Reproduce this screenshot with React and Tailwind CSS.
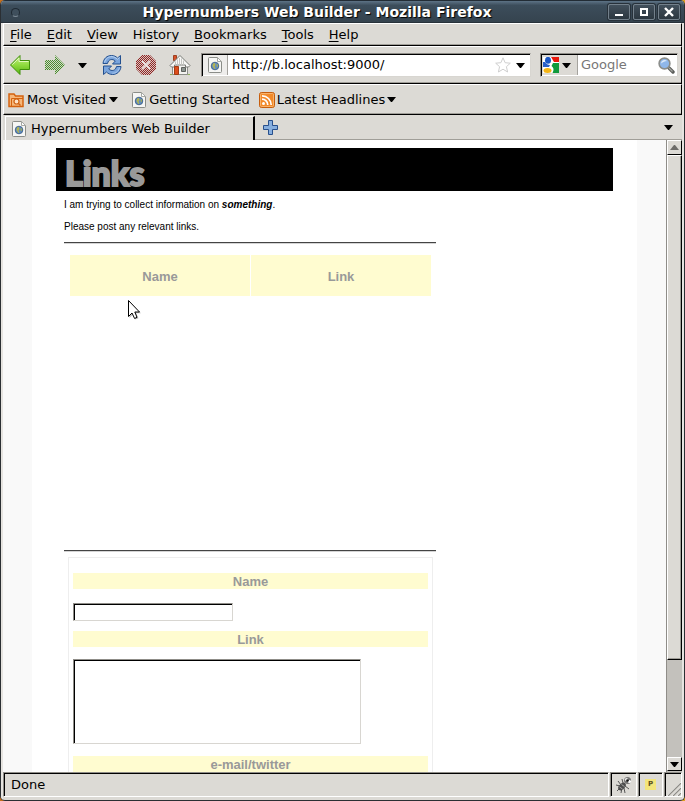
import React from "react";

const menus = [
  ["F", "ile", ""],
  ["E", "dit", ""],
  ["V", "iew", ""],
  ["s", "tory", "Hi"],
  ["B", "ookmarks", ""],
  ["T", "ools", ""],
  ["H", "elp", ""],
];

const raised = "border border-t-white border-l-white border-r-black border-b-black bg-[#dcdad5]";
const panel = `${raised} shadow-[inset_0_-1px_0_#a09e98]`;
const field = "border border-t-[#8f8d88] border-l-[#8f8d88] border-r-[#d8d6d1] border-b-[#d8d6d1] bg-white shadow-[inset_1px_1px_0_#000]";
const statusCell = "border border-t-[#8f8d88] border-l-[#8f8d88] border-r-white border-b-white shadow-[inset_1px_1px_0_#000]";

function Caret({ className = "" }) {
  return (
    <svg className={className} width="9" height="5" viewBox="0 0 9 5" aria-hidden="true">
      <path d="M0 0h9L5 5H4z" fill="#000" />
    </svg>
  );
}

function PageIcon() {
  return (
    <svg width="14" height="16" viewBox="0 0 14 16" className="shrink-0" aria-hidden="true">
      <path d="M1.500.5h8l4 4v10a1 1 0 0 1-1 1h-11a1 1 0 0 1-1-1v-13a1 1 0 0 1 1-1z" fill="#f6f6f4" stroke="#8b8d88" />
      <path d="M9.500.5v4h4z" fill="#fff" stroke="#a6a8a3" />
      <circle cx="7" cy="9" r="3.800" fill="#5f8cc4" stroke="#33557f" strokeWidth=".8" />
      <path d="M5 6.500l2-.5.500 2-1 1.500 1 2-1.200.5L4.500 9z" fill="#b5b450" />
      <path d="M8.500 7l1.500.5v2l-1.200 1z" fill="#a3ac58" />
    </svg>
  );
}

function BackIcon() {
  return (
    <svg width="22" height="22" viewBox="0 0 22 22" aria-hidden="true">
      <defs>
        <linearGradient id="back" x1="0" y1="0" x2="0" y2="1">
          <stop offset="0" stopColor="#c9f08d" />
          <stop offset=".5" stopColor="#8fdb3e" />
          <stop offset="1" stopColor="#59b512" />
        </linearGradient>
      </defs>
      <path d="M.5 11 10 1.500V6.500H19.500V15.500H10V20.500z" fill="url(#back)" stroke="#3f8f0a" strokeLinejoin="round" />
      <path d="M2.300 10.700 9 4v3.500h9.500" fill="none" stroke="#e0f8ba" />
    </svg>
  );
}

function ForwardIcon() {
  return (
    <svg width="22" height="22" viewBox="0 0 22 22" aria-hidden="true">
      <defs>
        <pattern id="fwdDots" width="2" height="2" patternUnits="userSpaceOnUse">
          <rect width="2" height="2" fill="#cfdcc4" />
          <path d="M0 0h1v1H0zM1 1h1v1H1z" fill="#4c8a30" />
        </pattern>
      </defs>
      <path d="M21 11 11 1v5H1v10h10v5z" fill="url(#fwdDots)" />
    </svg>
  );
}

function ReloadIcon() {
  return (
    <svg width="22" height="22" viewBox="0 0 22 22" aria-hidden="true">
      <g fill="#7ba5dc" stroke="#24508f" strokeLinejoin="round">
        <path d="M2 9.500C2.500 4.500 6 1.500 10.500 1.500c2.500 0 4.500 1 6 2.500l3-2.500v8.500h-8l2.800-3C11.500 4.500 7.500 5 6.500 9.500z" />
        <path d="M20 12.500c-.5 5-4 8-8.500 8-2.500 0-4.500-1-6-2.500l-3 2.500V12h8l-2.800 3c2.800 2.500 6.800 2 7.800-2.500z" />
      </g>
      <path d="M3.500 8.500C4.500 4.500 7.500 2.500 11 2.700c2 .1 3.800 1 5.300 2.600l2.200-1.800" fill="none" stroke="#bcd5f3" />
      <path d="M18.500 13.500c-1 4-3.500 5.700-7 5.800" fill="none" stroke="#a9c7ee" />
    </svg>
  );
}

function StopIcon() {
  return (
    <svg width="22" height="22" viewBox="0 0 22 22" aria-hidden="true">
      <defs>
        <pattern id="stopDots" width="2" height="2" patternUnits="userSpaceOnUse">
          <rect width="2" height="2" fill="#d9c3bf" />
          <path d="M0 0h1v1H0zM1 1h1v1H1z" fill="#8e2624" />
        </pattern>
      </defs>
      <path d="M7 1h8l6 6v8l-6 6H7l-6-6V7z" fill="url(#stopDots)" />
      <path d="M7 7l8 8M15 7l-8 8" stroke="#ece2e0" strokeWidth="1.800" />
    </svg>
  );
}

function HomeIcon() {
  return (
    <svg width="22" height="22" viewBox="0 0 22 22" aria-hidden="true">
      <path d="M1 20.500h20" stroke="#8fb35c" />
      <path d="M4.500 1.500h3v5h-3z" fill="#d8512a" stroke="#9c4020" />
      <path d="M3.500 11 11 4l7.500 7v9.500h-15z" fill="#f3f3f0" stroke="#8b8d88" />
      <path d="M1 11.500 11 1.500l10 10-1.500 1.500h-3V11h-11v2h-3z" fill="#f8f8f6" stroke="#777974" strokeLinejoin="round" />
      <path d="M6.500 7.500v4M8.500 5.500v6M10.500 4v7.500M12.500 4.500v7M14.500 6.500v5" stroke="#c4c5c1" />
      <path d="M5.500 12.500h4v8h-4z" fill="#dc4e1c" stroke="#a23c14" />
      <path d="M12.500 13.500h4v4h-4z" fill="#8d9691" stroke="#5d605c" />
    </svg>
  );
}

function FolderIcon() {
  return (
    <svg width="16" height="16" viewBox="0 0 16 16" aria-hidden="true">
      <path d="M1 14.500V2h5l1.500 2H15v10.500z" fill="#f6b77a" stroke="#d4620e" strokeWidth="1.500" />
      <path d="M3.500 14V6.500H15" fill="none" stroke="#d4620e" />
      <circle cx="8.500" cy="9.500" r="2.500" fill="#fde3c8" stroke="#cf5f10" strokeWidth="1.200" />
      <path d="m10.500 11.500 2 2" stroke="#cf5f10" strokeWidth="1.500" />
    </svg>
  );
}

function FeedIcon() {
  return (
    <svg width="16" height="16" viewBox="0 0 16 16" aria-hidden="true">
      <rect x=".5" y=".5" width="15" height="15" rx="2" fill="#f28a2a" stroke="#c65d0c" />
      <rect x="1.500" y="1.500" width="13" height="13" rx="1" fill="none" stroke="#f8b36b" />
      <circle cx="4.500" cy="11.500" r="1.500" fill="#fff" />
      <path d="M3 7.200A5.800 5.800 0 0 1 8.800 13M3 3.800A9.200 9.200 0 0 1 12.200 13" fill="none" stroke="#fff" strokeWidth="1.700" />
    </svg>
  );
}

function EngineIcon() {
  return (
    <svg width="16" height="16" viewBox="0 0 16 16" aria-hidden="true">
      <rect width="16" height="16" fill="#fff" />
      <path d="M8 0h8v5h-5z" fill="#e8180c" />
      <path d="M10 6h6v10H9.500c1.500-3 1.500-5-1-7z" fill="#109a3c" />
      <path d="M0 5h2c1 2 3 3 5 3l-1 2H0z" fill="#2a60c8" />
      <ellipse cx="5" cy="3.300" rx="3" ry="3.500" fill="#1b57c4" />
      <ellipse cx="4.500" cy="13.500" rx="4" ry="2.500" fill="#f3b414" />
    </svg>
  );
}

function SearchIcon() {
  return (
    <svg width="17" height="17" viewBox="0 0 17 17" aria-hidden="true">
      <path d="m10.500 10.500 4.500 4.500" stroke="#5b5d5a" strokeWidth="3.400" strokeLinecap="round" />
      <path d="m11 11 3.500 3.500" stroke="#a4a6a2" strokeWidth="1.200" />
      <circle cx="6.500" cy="6.500" r="5.400" fill="#8fb7ea" stroke="#8b8d8a" strokeWidth="1.600" />
      <path d="M3 6.500a3.500 3.500 0 0 1 6-2.500C7 4 5 5 3 6.500z" fill="#dceafa" />
    </svg>
  );
}

function BugIcon() {
  return (
    <svg width="18" height="18" viewBox="0 0 18 18" aria-hidden="true">
      <path d="M3 5l3 4M1 9l4 1M2 15l4-4M6 17l1-5M10 17l-1-5M14 13l-4-3M7 3l1 4" stroke="#555" strokeWidth="1" />
      <ellipse cx="7" cy="10.500" rx="4.500" ry="2.800" transform="rotate(-45 7 10.500)" fill="#4c4c4c" />
      <path d="m4.500 11 3 2M6.500 8.500l3 2" stroke="#a5a5a5" />
      <circle cx="12.500" cy="4.500" r="3.500" fill="#777" />
      <circle cx="11.500" cy="3.500" r="1.600" fill="#eee" />
      <circle cx="14.500" cy="5.500" r="1.600" fill="#fff" />
      <circle cx="12.500" cy="4.500" r="1.300" fill="#111" />
    </svg>
  );
}

function WindowButton({ label, children }) {
  return (
    <button aria-label={label} className="flex h-4 w-[22px] items-center justify-center rounded-[2px] border border-[#73808b] bg-linear-to-b from-[#42505c] to-[#2c3740] shadow-[0_0_0_1px_#27313a]">
      <svg width="10" height="10" viewBox="0 0 10 10" fill="none" stroke="#fff" strokeWidth="2" aria-hidden="true">
        {children}
      </svg>
    </button>
  );
}

function Rule() {
  return <hr className="h-[2px] w-[372px] border-0 border-t border-[#444] bg-[#d4d4d4]" />;
}

const band = "block h-4 bg-[#fffcd0] text-center text-[13px] leading-[18px] font-bold text-[#999]";

export default function App() {
  return (
    <div className="h-screen bg-linear-to-r from-[#c8701c] to-[#e0a020] font-['DejaVu_Sans',sans-serif] text-[13px] text-black">
      <div className="flex h-full flex-col overflow-hidden rounded-[5px] border-x border-b border-[#2b2f33] bg-[#dcdad5]">
        <header className="flex h-[23px] shrink-0 items-center border-t border-[#222c35] bg-linear-to-b from-[#5d7386] via-[#3c4d5b] via-20% to-[#35434e] pr-1 pl-2 shadow-[inset_0_-1px_0_#28323a]">
          <button aria-label="Window menu" className="mx-[2px] h-[9px] w-[9px] rounded-full border border-[#1f2a33] border-b-[#7c8a95] bg-[#3f4f5c]" />
          <h1 className="flex-1 pl-1 text-center text-[14px] leading-[21px] font-bold whitespace-nowrap text-white [text-shadow:1px_1px_1px_#000]">
            Hypernumbers Web Builder - Mozilla Firefox
          </h1>
          <div className="flex gap-[3px]">
            <WindowButton label="Minimize"><path d="M1 8h8" /></WindowButton>
            <WindowButton label="Maximize"><path d="M2 2h6v6H2z" /></WindowButton>
            <WindowButton label="Close"><path d="m1 1 8 8M9 1 1 9" strokeWidth="2.400" /></WindowButton>
          </div>
        </header>

        <div className="flex min-h-0 flex-1 flex-col border-x-2 border-x-[#e6e4e0] pb-[3px]">
          <nav className={`flex h-[23px] shrink-0 items-center gap-[15px] pl-[6px] ${panel}`}>
            {menus.map(([key, rest, lead]) => (
              <button key={key + rest} className="leading-4 whitespace-nowrap">
                {lead}
                <span className="underline underline-offset-2">{key}</span>
                {rest}
              </button>
            ))}
          </nav>

          <div className={`flex h-[38px] shrink-0 items-center pr-[3px] pl-[6px] ${panel}`}>
            <button aria-label="Back"><BackIcon /></button>
            <button aria-label="Forward" className="ml-3"><ForwardIcon /></button>
            <button aria-label="History list" className="ml-3"><Caret /></button>
            <button aria-label="Reload" className="ml-[14px]"><ReloadIcon /></button>
            <button aria-label="Stop" className="ml-3"><StopIcon /></button>
            <button aria-label="Home" className="ml-3"><HomeIcon /></button>
            <div className={`ml-[10px] flex h-6 min-w-0 flex-1 items-center p-[1px] ${field}`}>
              <span className="flex h-full w-[25px] shrink-0 items-center justify-center border-r border-[#a5a39e] bg-[#eeedeb]"><PageIcon /></span>
              <input aria-label="Address" defaultValue="http://b.localhost:9000/" className="min-w-0 flex-1 bg-transparent pl-1 outline-none" />
              <button aria-label="Bookmark this page">
                <svg width="16" height="16" viewBox="0 0 16 16" aria-hidden="true">
                  <path d="M8 .8l2.100 4.900 5.200.5-3.900 3.500 1.200 5.300L8 12.200 3.400 15l1.200-5.300L.7 6.200l5.200-.5z" fill="#fff" stroke="#cfcfcf" />
                </svg>
              </button>
              <button aria-label="Show addresses" className="mr-1 ml-[5px]"><Caret /></button>
            </div>
            <div className={`ml-[9px] flex h-6 w-[138px] shrink-0 items-center p-[1px] ${field}`}>
              <button aria-label="Search engine" className="flex h-full w-[36px] items-center gap-[3px] border-r border-[#a5a39e] bg-[#dcdad5] pl-[1px]">
                <EngineIcon />
                <Caret />
              </button>
              <input aria-label="Search" placeholder="Google" className="min-w-0 flex-1 bg-transparent pl-[3px] outline-none placeholder:text-[#777]" />
              <button aria-label="Search the web" className="mr-[1px]"><SearchIcon /></button>
            </div>
          </div>

          <div className={`flex h-[31px] shrink-0 items-center pl-1 leading-4 whitespace-nowrap ${panel}`}>
            <button className="flex items-center gap-[3px]"><FolderIcon />Most Visited<Caret /></button>
            <a href="#started" className="ml-[14px] flex items-center gap-[3px]"><PageIcon />Getting Started</a>
            <button className="ml-[9px] flex items-center gap-[2px]"><FeedIcon />Latest Headlines<Caret /></button>
          </div>

          <div className="flex h-[25px] shrink-0 pt-[1px] pl-[2px]">
            <button className="flex w-[250px] items-center gap-[5px] border-t border-r-2 border-l border-t-white border-r-black border-l-white pl-[6px] whitespace-nowrap">
              <PageIcon />Hypernumbers Web Builder
            </button>
            <div className="flex flex-1 items-center justify-between border-b border-[#a09e98] pr-[9px] pl-2">
              <button aria-label="New tab">
                <svg width="15" height="15" viewBox="0 0 15 15" aria-hidden="true">
                  <path d="M5.500.5h4v5h5v4h-5v5h-4v-5h-5v-4h5z" fill="#86aede" stroke="#274f8c" />
                </svg>
              </button>
              <button aria-label="List tabs"><Caret /></button>
            </div>
          </div>

          <div className="flex min-h-0 flex-1">
            <main className="min-w-0 flex-1 overflow-hidden bg-[#f9f9f9] px-[29px] font-['Liberation_Sans',Arial,sans-serif]">
              <div className="h-full bg-white px-6 pt-2">
                <h2 className="flex h-[43px] items-center bg-black pt-[6px] pl-[9px] font-[Lato,sans-serif] text-[34px] leading-[36px] font-black text-[#999] [-webkit-text-stroke:2px_#999]">Links</h2>
                <div className="w-[388px] px-2">
                  <p className="pt-2 text-[10px] leading-3">I am trying to collect information on <b><i>something</i></b>.</p>
                  <p className="pt-[10px] pb-[9px] text-[10px] leading-3">Please post any relevant links.</p>
                  <Rule />
                  <div className="h-[306px] pt-[10px] pr-1 pl-[5px]">
                    <table className="w-full table-fixed border-separate border-spacing-[1px] text-[13px] text-[#999]">
                      <thead>
                        <tr>
                          <th className="h-[41px] bg-[#fffcd0] p-0 pt-[2px]">Name</th>
                          <th className="h-[41px] bg-[#fffcd0] p-0 pt-[2px]">Link</th>
                        </tr>
                      </thead>
                    </table>
                  </div>
                  <Rule />
                  <form className="mt-[5px] mr-[3px] ml-1 border border-[#eee] px-1 pt-[15px]">
                    <label htmlFor="name" className={band}>Name</label>
                    <input id="name" className={`mt-[14px] block h-[18px] w-[160px] px-1 outline-none ${field}`} />
                    <label htmlFor="link" className={`mt-[10px] ${band}`}>Link</label>
                    <textarea id="link" className={`mt-3 block h-[85px] w-[288px] resize-none px-1 outline-none ${field}`} />
                    <label htmlFor="contact" className={`mt-3 ${band}`}>e-mail/twitter</label>
                    <input id="contact" className={`mt-[14px] block h-[18px] w-[160px] px-1 outline-none ${field}`} />
                  </form>
                </div>
              </div>
            </main>
            <div className="flex w-4 shrink-0 flex-col border-l border-[#8f8d88] bg-[#c3c1bc] pb-[1px]">
              <button aria-label="Scroll up" className={`flex h-[15px] items-center justify-center ${raised}`}>
                <Caret className="rotate-180 opacity-50" />
              </button>
              <div className={`h-[505px] ${raised} shadow-[inset_-1px_-1px_0_#a09e98]`} />
              <div className="flex-1" />
              <button aria-label="Scroll down" className={`flex h-[14px] items-center justify-center ${raised}`}>
                <Caret />
              </button>
            </div>
          </div>

          <footer className="flex h-[25px] shrink-0 gap-[1px]">
            <div className={`flex-1 pl-[7px] leading-[23px] ${statusCell}`}>Done</div>
            <div className={`flex w-[27px] items-center justify-center ${statusCell}`}><BugIcon /></div>
            <div className={`flex w-[25px] items-center justify-center ${statusCell}`}>
              <span className="h-[11px] w-[11px] bg-[#f3e57c] text-center text-[7px] leading-[11px] font-bold text-[#5a5020]">P</span>
            </div>
            <div className={`flex w-[18px] items-end justify-end ${statusCell}`}>
              <svg width="15" height="15" viewBox="0 0 15 15" aria-hidden="true">
                <path d="M1 15 15 1M6 15l9-9M11 15l4-4" stroke="#fff" />
                <path d="M2 15 15 2M7 15l8-8M12 15l3-3" stroke="#8f8d88" strokeWidth="1.300" />
              </svg>
            </div>
          </footer>
        </div>
      </div>

      <svg className="pointer-events-none absolute top-[299px] left-[127px]" width="16" height="24" viewBox="0 0 16 24" aria-hidden="true">
        <path d="M2.500 3v16l3.500-3.500 2.500 5 3-1.200-2.300-5H14z" fill="#000" opacity=".25" />
        <path d="M1.500 1.500v16L5 14l2.600 5.500 2.400-1.200L7.800 13H12.500z" fill="#fff" stroke="#000" />
      </svg>
    </div>
  );
}
